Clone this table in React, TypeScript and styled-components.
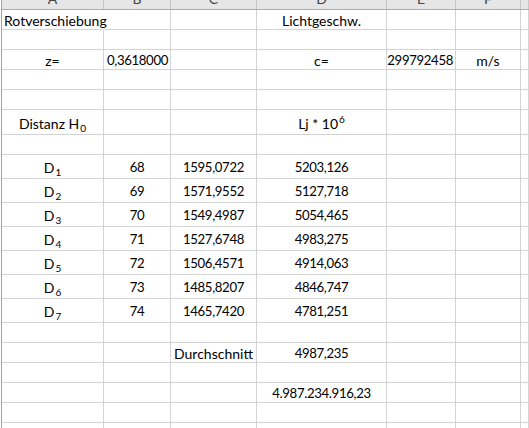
import React from "react";
import styled, { createGlobalStyle } from "styled-components";

const GlobalStyle = createGlobalStyle`
  html, body { margin: 0; padding: 0; background: #ffffff; }
  body { overflow: hidden; }
`;

const COLS = "102px 67px 86px 130px 69px 65px 1fr";
const LINE = "#d4d4d4";

const Wrapper = styled.div`
  margin-left: 1px;
  border-left: 1px solid #a3a3a3;
  height: 428px;
  overflow: hidden;
  font-family: Lato, "Liberation Sans", sans-serif;
  font-size: 14px;
  color: #000;
`;

const Sheet = styled.div`
  display: flex;
  flex-direction: column;
`;

const HeaderRow = styled.div`
  display: grid;
  grid-template-columns: ${COLS};
  height: 10px;
  background: #e6e6e6;
  border-bottom: 1px solid #ababab;
  box-sizing: border-box;
`;

const HeaderCell = styled.div`
  border-right: 1px solid #c6c6c6;
  overflow: hidden;
  display: flex;
  justify-content: center;
  align-items: flex-start;
  color: #444;
  line-height: 17px;
  & > span {
    margin-top: -10px;
  }
`;

const Row = styled.div<{ $h: number }>`
  display: grid;
  grid-template-columns: ${COLS};
  height: ${(p) => p.$h}px;
`;

const Cell = styled.div<{
  $align: "l" | "c" | "r";
  $tall: boolean;
  $spill?: boolean;
  $num?: boolean;
}>`
  box-sizing: border-box;
  border-right: 1px solid ${(p) => (p.$spill ? "transparent" : LINE)};
  border-bottom: 1px solid ${LINE};
  display: flex;
  align-items: flex-end;
  justify-content: ${(p) =>
    p.$align === "l" ? "flex-start" : p.$align === "r" ? "flex-end" : "center"};
  padding: 0 ${(p) => (p.$align === "r" ? "2px" : "0")} ${(p) => (p.$tall ? "2px" : "0")}
    ${(p) => (p.$align === "l" ? "2px" : "0")};
  white-space: nowrap;
  line-height: 17px;
  font-size: ${(p) => (p.$num ? "13.2px" : "14px")};
  letter-spacing: ${(p) => (p.$num ? "-0.35px" : "0")};
  overflow: visible;
  position: relative;
  z-index: ${(p) => (p.$spill ? 1 : 0)};
`;

const Sub = styled.sub`
  font-size: 10px;
  line-height: 0;
  vertical-align: -3px;
  margin-left: 1px;
`;

const Sup = styled.sup`
  font-size: 10px;
  line-height: 0;
  vertical-align: 6px;
  margin-left: 1px;
`;

type CellDef = {
  t: React.ReactNode;
  a: "l" | "c" | "r";
  spill?: boolean;
  num?: boolean;
} | null;
type RowDef = { h: number; cells: CellDef[] };

const E: CellDef = null;
const c = (t: React.ReactNode): CellDef => ({ t, a: "c" });
const n = (t: React.ReactNode): CellDef => ({ t, a: "c", num: true });
const r = (t: React.ReactNode): CellDef => ({ t, a: "r", num: true });

const dRows: [number, string, string][] = [
  [68, "1595,0722", "5203,126"],
  [69, "1571,9552", "5127,718"],
  [70, "1549,4987", "5054,465"],
  [71, "1527,6748", "4983,275"],
  [72, "1506,4571", "4914,063"],
  [73, "1485,8207", "4846,747"],
  [74, "1465,7420", "4781,251"],
];

const empty = (h = 20): RowDef => ({ h, cells: [E, E, E, E, E, E, E] });

const rows: RowDef[] = [
  {
    h: 20,
    cells: [{ t: "Rotverschiebung", a: "l", spill: true }, E, E, c("Lichtgeschw."), E, E, E],
  },
  empty(),
  { h: 20, cells: [c("z="), r("0,3618000"), E, c("c="), r("299792458"), c("m/s"), E] },
  empty(),
  empty(),
  {
    h: 25,
    cells: [
      c(
        <span>
          Distanz H<Sub>0</Sub>
        </span>
      ),
      E,
      E,
      c(
        <span>
          Lj * 10<Sup>6</Sup>
        </span>
      ),
      E,
      E,
      E,
    ],
  },
  empty(),
  ...dRows.map(([num, v1, v2], i) => ({
    h: 24,
    cells: [
      c(
        <span>
          D<Sub>{i + 1}</Sub>
        </span>
      ),
      n(String(num)),
      n(v1),
      n(v2),
      E,
      E,
      E,
    ],
  })),
  empty(),
  { h: 20, cells: [E, E, c("Durchschnitt"), n("4987,235"), E, E, E] },
  empty(),
  { h: 20, cells: [E, E, E, n("4.987.234.916,23"), E, E, E] },
  empty(),
  empty(),
];

const LETTERS = ["A", "B", "C", "D", "E", "F", ""];

export default function App() {
  return (
    <>
      <GlobalStyle />
      <Wrapper>
        <Sheet>
          <HeaderRow>
            {LETTERS.map((l, i) => (
              <HeaderCell key={i}>
                <span>{l}</span>
              </HeaderCell>
            ))}
          </HeaderRow>
          {rows.map((row, ri) => (
            <Row key={ri} $h={row.h}>
              {row.cells.map((cell, ci) => (
                <Cell
                  key={ci}
                  $align={cell ? cell.a : "c"}
                  $tall={row.h > 20}
                  $spill={cell?.spill}
                  $num={cell?.num}
                >
                  {cell ? cell.t : null}
                </Cell>
              ))}
            </Row>
          ))}
        </Sheet>
      </Wrapper>
    </>
  );
}
